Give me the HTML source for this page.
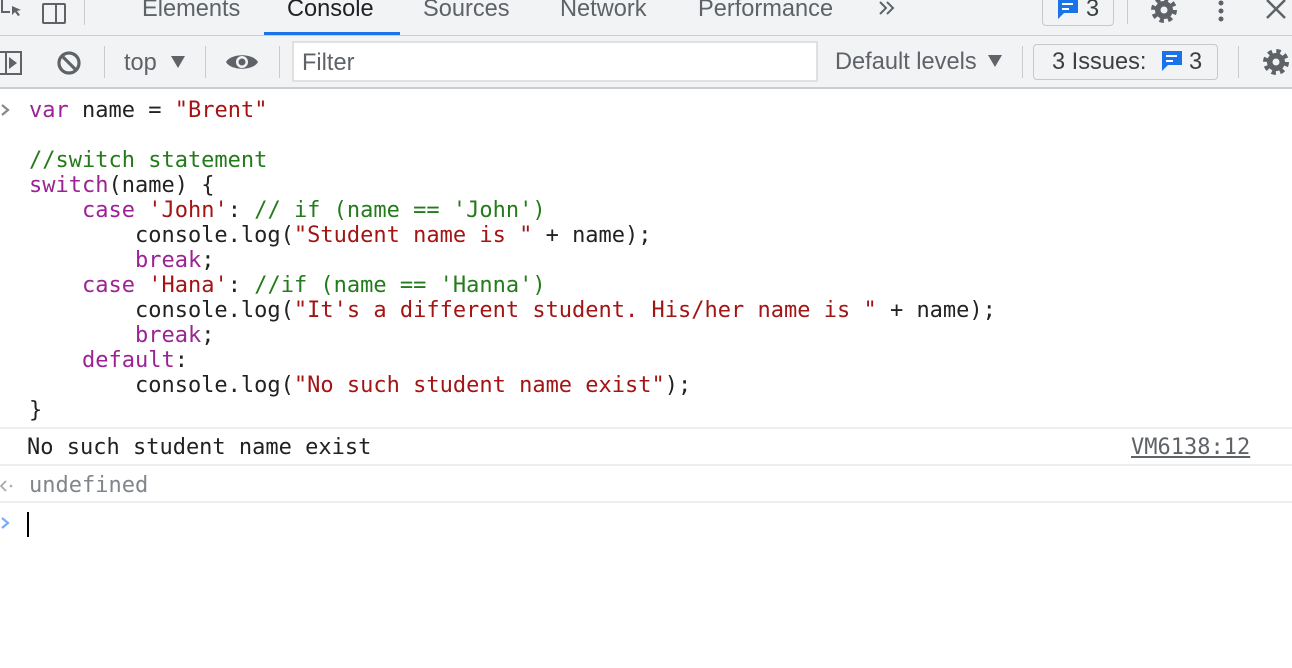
<!DOCTYPE html>
<html><head><meta charset="utf-8"><style>
*{margin:0;padding:0;box-sizing:border-box}
body{width:1292px;height:668px;overflow:hidden;background:#fff;font-family:"Liberation Sans",Arial,sans-serif;position:relative}
.top{position:absolute;left:0;top:0;width:1292px;height:36px;background:#f1f3f4;border-bottom:1px solid #cbcdd1}
.tb{position:absolute;left:0;top:36px;width:1292px;height:53px;background:#f1f3f4;border-bottom:2px solid #cbcdd1}
.t{position:absolute;font-size:23.6px;color:#5f6368;top:-4px}
.sep{position:absolute;width:1px;background:#ccc}
.code{position:absolute;left:29px;top:98px;font-family:"DejaVu Sans Mono","Liberation Mono",monospace;font-size:22px;line-height:25px;white-space:pre;color:#222}
.k{color:#9b2393}.s{color:#a31515}.c{color:#247b1b}
.mono{font-family:"DejaVu Sans Mono","Liberation Mono",monospace;font-size:22px;position:absolute;white-space:pre}
.hr{position:absolute;left:0;width:1292px;height:2px;background:#eceef0}
</style></head><body>
<div class="top">
<svg style="position:absolute;left:0;top:0" width="90" height="30"><path d="M2 0v12h8" fill="none" stroke="#5f6368" stroke-width="2"/><path d="M12 6l9 4-4 1 3 4-2 1-3-4-3 3z" fill="#5f6368"/><rect x="43" y="4" width="22" height="19" rx="1" fill="none" stroke="#5f6368" stroke-width="2"/><line x1="56" y1="4" x2="56" y2="23" stroke="#5f6368" stroke-width="2"/></svg>
<div class="sep" style="left:84px;top:0;height:25px"></div>
<div class="t" style="left:142px">Elements</div>
<div class="t" style="left:287px;color:#202124">Console</div>
<div style="position:absolute;left:264px;top:32px;width:136px;height:3px;background:#1a73e8"></div>
<div class="t" style="left:423px">Sources</div>
<div class="t" style="left:560px">Network</div>
<div class="t" style="left:698px">Performance</div>
<svg style="position:absolute;left:878px;top:1px" width="18" height="14"><path d="M2 1l6 6-6 6M9 1l6 6-6 6" fill="none" stroke="#5f6368" stroke-width="2"/></svg>
<div style="position:absolute;left:1042px;top:-3px;width:72px;height:29px;border:1px solid #c8c8c8;border-radius:4px;background:#f1f3f4"></div>
<svg style="position:absolute;left:1057px;top:0" width="22" height="20"><path d="M1 0h20v13H7l-6 6z" fill="#1a73e8"/><rect x="5" y="3" width="11" height="2" fill="#fff"/><rect x="5" y="8" width="7" height="2" fill="#fff"/></svg>
<div class="t" style="left:1086px;color:#3c4043">3</div>
<div class="sep" style="left:1127px;top:0;height:24px"></div>
<svg style="position:absolute;left:1148px;top:-6px" width="32" height="32"><circle cx="16" cy="16" r="10" fill="none" stroke="#5f6368" stroke-width="6" stroke-dasharray="4 3.85"/><circle cx="16" cy="16" r="9" fill="#5f6368"/><circle cx="16" cy="16" r="3.5" fill="#f1f3f4"/></svg>
<svg style="position:absolute;left:1214px;top:0" width="14" height="24"><circle cx="7" cy="3" r="2.5" fill="#5f6368"/><circle cx="7" cy="11" r="2.5" fill="#5f6368"/><circle cx="7" cy="19" r="2.5" fill="#5f6368"/></svg>
<svg style="position:absolute;left:1265px;top:0" width="22" height="20"><path d="M2 0l18 18M20 0L2 18" stroke="#5f6368" stroke-width="2.5"/></svg>
</div>
<div class="tb">
<svg style="position:absolute;left:0;top:15px" width="90" height="28"><rect x="-1" y="1" width="22" height="22" fill="none" stroke="#5f6368" stroke-width="2"/><line x1="6" y1="1" x2="6" y2="23" stroke="#5f6368" stroke-width="2"/><path d="M9 6l8 6-8 6z" fill="#5f6368"/><circle cx="69" cy="12" r="10" fill="none" stroke="#5f6368" stroke-width="3.2"/><path d="M62 5l14 14" stroke="#5f6368" stroke-width="3.2"/></svg>
<div class="sep" style="left:104px;top:10px;height:32px"></div>
<div class="t" style="left:124px;top:14px">top</div>
<svg style="position:absolute;left:171px;top:20px" width="14" height="12"><path d="M0 0h14L7 12z" fill="#5f6368"/></svg>
<div class="sep" style="left:205px;top:10px;height:32px"></div>
<svg style="position:absolute;left:225px;top:15px" width="34" height="22"><path d="M1 11C6 2 28 2 33 11 28 20 6 20 1 11z" fill="#5f6368"/><circle cx="17" cy="11" r="6" fill="#f1f3f4"/><circle cx="17" cy="11" r="3.5" fill="#5f6368"/></svg>
<div class="sep" style="left:279px;top:10px;height:32px"></div>
<div style="position:absolute;left:292px;top:5px;width:526px;height:41px;background:#fff;border:2px solid #e0e0e0"></div>
<div class="t" style="left:302px;top:14px;color:#5f6368">Filter</div>
<div class="t" style="left:835px;top:13px">Default levels</div>
<svg style="position:absolute;left:988px;top:19px" width="14" height="12"><path d="M0 0h14L7 12z" fill="#5f6368"/></svg>
<div class="sep" style="left:1022px;top:10px;height:32px"></div>
<div style="position:absolute;left:1033px;top:8px;width:185px;height:36px;border:1px solid #c8c8c8;border-radius:4px"></div>
<div class="t" style="left:1052px;top:13px;color:#3c4043">3 Issues:</div>
<svg style="position:absolute;left:1161px;top:15px" width="22" height="22"><path d="M1 0h20v14H7l-6 6z" fill="#1a73e8"/><rect x="5" y="4" width="11" height="2" fill="#fff"/><rect x="5" y="9" width="7" height="2" fill="#fff"/></svg>
<div class="t" style="left:1189px;top:13px;color:#3c4043">3</div>
<div class="sep" style="left:1238px;top:10px;height:32px"></div>
<svg style="position:absolute;left:1260px;top:10px" width="32" height="32"><circle cx="16" cy="16" r="10" fill="none" stroke="#5f6368" stroke-width="6" stroke-dasharray="4 3.85"/><circle cx="16" cy="16" r="9" fill="#5f6368"/><circle cx="16" cy="16" r="3.5" fill="#f1f3f4"/></svg>
</div>
<svg style="position:absolute;left:0;top:103px" width="12" height="14"><path d="M2 2l6 5-6 5" fill="none" stroke="#888" stroke-width="2.2"/></svg>
<div class="code"><span class="k">var</span> name = <span class="s">"Brent"</span>

<span class="c">//switch statement</span>
<span class="k">switch</span>(name) {
    <span class="k">case</span> <span class="s">'John'</span>: <span class="c">// if (name == 'John')</span>
        console.log(<span class="s">"Student name is "</span> + name);
        <span class="k">break</span>;
    <span class="k">case</span> <span class="s">'Hana'</span>: <span class="c">//if (name == 'Hanna')</span>
        console.log(<span class="s">"It's a different student. His/her name is "</span> + name);
        <span class="k">break</span>;
    <span class="k">default</span>:
        console.log(<span class="s">"No such student name exist"</span>);
}</div>
<div class="hr" style="top:427px"></div>
<div class="mono" style="left:27px;top:435px;color:#202124">No such student name exist</div>
<div class="mono" style="left:1131px;top:435px;color:#5f6368;text-decoration:underline">VM6138:12</div>
<div class="hr" style="top:464px"></div>
<svg style="position:absolute;left:0;top:479px" width="14" height="14"><path d="M6 2L1 7l5 5" fill="none" stroke="#aaa" stroke-width="1.8"/><circle cx="11" cy="7" r="1.3" fill="#aaa"/></svg>
<div class="mono" style="left:29px;top:473px;color:#80868b">undefined</div>
<div class="hr" style="top:501px"></div>
<svg style="position:absolute;left:0;top:516px" width="12" height="14"><path d="M2 2l6 5-6 5" fill="none" stroke="#7baaf7" stroke-width="2.2"/></svg>
<div style="position:absolute;left:27px;top:512px;width:2px;height:25px;background:#000"></div>
</body></html>
